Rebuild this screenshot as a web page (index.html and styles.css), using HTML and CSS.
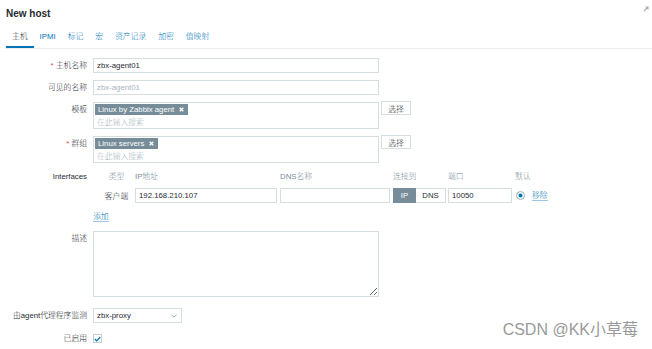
FILE: index.html
```html
<!DOCTYPE html>
<html lang="zh-CN">
<head>
    <meta charset="UTF-8">
    <meta name="viewport" content="width=device-width, initial-scale=1.0">
    <title>New host</title>
    <link rel="stylesheet" href="styles.css">
</head>
<body>
    <div class="dialog">
        <div class="head">
            <h4 class="title">New host</h4>
            <span class="expand">
                <svg width="6" height="6" viewBox="0 0 6 6"><path d="M1 5 L5 1 M2.5 1 H5 V3.5" stroke="#9fb0b9" stroke-width="1.2" fill="none"/></svg>
            </span>
        </div>

        <ul class="tabs">
            <li class="active">主机</li>
            <li>IPMI</li>
            <li>标记</li>
            <li>宏</li>
            <li>资产记录</li>
            <li>加密</li>
            <li>值映射</li>
        </ul>

        <div class="form">
            <div class="row">
                <label class="lbl"><span class="req">*</span> 主机名称</label>
                <div class="ctl"><input class="inp" type="text" value="zbx-agent01"></div>
            </div>
            <div class="row">
                <label class="lbl">可见的名称</label>
                <div class="ctl"><input class="inp" type="text" placeholder="zbx-agent01"></div>
            </div>
            <div class="row">
                <label class="lbl">模板</label>
                <div class="ctl ctl-multi">
                    <div class="multi">
                        <div class="tags">
                            <span class="tag">Linux by Zabbix agent
                                <svg width="5" height="5" viewBox="0 0 5 5"><path d="M0.7 0.7 L4.3 4.3 M4.3 0.7 L0.7 4.3" stroke="#fff" stroke-width="1.3"/></svg>
                            </span>
                        </div>
                        <div class="search">在此输入搜索</div>
                    </div>
                    <button class="btn">选择</button>
                </div>
            </div>
            <div class="row row-group">
                <label class="lbl"><span class="req">*</span> 群组</label>
                <div class="ctl ctl-multi">
                    <div class="multi">
                        <div class="tags">
                            <span class="tag">Linux servers
                                <svg width="5" height="5" viewBox="0 0 5 5"><path d="M0.7 0.7 L4.3 4.3 M4.3 0.7 L0.7 4.3" stroke="#fff" stroke-width="1.3"/></svg>
                            </span>
                        </div>
                        <div class="search">在此输入搜索</div>
                    </div>
                    <button class="btn">选择</button>
                </div>
            </div>

            <div class="row row-if">
                <label class="lbl lbl-if">Interfaces</label>
                <div class="ctl">
                    <div class="if-grid">
                        <div class="if-head if-type">类型</div>
                        <div class="if-head">IP地址</div>
                        <div class="if-head">DNS名称</div>
                        <div class="if-head">连接到</div>
                        <div class="if-head">端口</div>
                        <div class="if-head">默认</div>

                        <div class="if-type">客户端</div>
                        <div><input class="inp inp-ip" type="text" value="192.168.210.107"></div>
                        <div><input class="inp inp-dns" type="text" value=""></div>
                        <div class="seg">
                            <span class="seg-on">IP</span>
                            <span class="seg-off">DNS</span>
                        </div>
                        <div><input class="inp inp-port" type="text" value="10050"></div>
                        <div class="if-default">
                            <span class="radio"></span>
                            <a class="link">移除</a>
                        </div>
                    </div>
                    <a class="link add">添加</a>
                </div>
            </div>

            <div class="row row-desc">
                <label class="lbl">描述</label>
                <div class="ctl"><textarea class="area"></textarea></div>
            </div>
            <div class="row row-proxy">
                <label class="lbl">由agent代理程序监测</label>
                <div class="ctl">
                    <div class="sel">
                        <span>zbx-proxy</span>
                        <svg width="6" height="4" viewBox="0 0 6 4"><path d="M0.5 0.8 L3 3.2 L5.5 0.8" stroke="#768d99" stroke-width="0.8" fill="none"/></svg>
                    </div>
                </div>
            </div>
            <div class="row row-check">
                <label class="lbl">已启用</label>
                <div class="ctl ctl-check">
                    <span class="check">
                        <svg width="7" height="6" viewBox="0 0 7 6"><path d="M0.8 3 L2.7 4.8 L6.2 1" stroke="#0275b8" stroke-width="1.2" fill="none"/></svg>
                    </span>
                </div>
            </div>
        </div>

        <div class="watermark">CSDN @KK小草莓</div>
    </div>
</body>
</html>
```

FILE: styles.css
```css
body {
    margin: 0;
    font-family: "Liberation Sans", Arial, "Noto Sans CJK SC", sans-serif;
    font-size: 7.8px;
    font-weight: 300;
    color: #1f2c33;
    background-color: #fff;
}
.dialog {
    position: relative;
    height: 349px;
    overflow: hidden;
}
.head {
    display: flex;
    justify-content: space-between;
    padding: 8px 3px 0 6px;
}
.title {
    margin: 0;
    font-size: 10px;
    font-weight: bold;
    line-height: 12px;
}
.expand {
    margin-top: -2px;
    line-height: 0;
}
.tabs {
    display: flex;
    list-style: none;
    margin: 8px 0 0 5px;
    padding: 0 0 0 1px;
    border-bottom: 1px solid #ebeef0;
}
.tabs li {
    padding: 4px 6px;
    line-height: 10px;
    color: #0275b8;
    border-bottom: 2px solid transparent;
}
.tabs li.active {
    color: #1f2c33;
    border-bottom-color: #0275b8;
}
.form {
    padding-top: 9px;
}
.row {
    display: flex;
    gap: 6px;
    margin-bottom: 7px;
}
.lbl {
    width: 87px;
    flex-shrink: 0;
    text-align: right;
    line-height: 15px;
    white-space: nowrap;
}
.req {
    color: #e54b4b;
}
.ctl {
    flex: 1;
}
.inp {
    display: block;
    width: 286px;
    height: 15px;
    box-sizing: border-box;
    margin: 0;
    padding: 0 3px;
    border: 1px solid #d6dde1;
    border-radius: 0;
    font: inherit;
    color: #1f2c33;
    background-color: #fff;
    outline: none;
}
.inp::placeholder {
    color: #a8b6bd;
}
.ctl-multi {
    display: flex;
    align-items: flex-start;
    gap: 2px;
}
.multi {
    width: 286px;
    height: 27px;
    box-sizing: border-box;
    border: 1px solid #d6dde1;
    padding: 0 1px;
}
.tags {
    display: flex;
    height: 12px;
    padding-top: 1px;
}
.tag {
    display: inline-flex;
    align-items: center;
    gap: 5px;
    height: 11px;
    padding: 0 4px 0 3px;
    background-color: #768d99;
    color: #fff;
    line-height: 11px;
}
.search {
    padding-left: 2px;
    line-height: 13px;
    color: #a8b6bd;
}
.btn {
    margin-top: -1px;
    width: 30px;
    height: 14px;
    padding: 0;
    border: 1px solid #d6dde1;
    background-color: #fff;
    font: inherit;
    color: #1f2c33;
}
.row-group {
    margin-bottom: 9px;
}
.row-if {
    margin-bottom: 9px;
}
.lbl-if {
    line-height: 10px;
}
.if-grid {
    display: grid;
    grid-template-columns: 42px 145px 113px 55px 67px auto;
    row-gap: 6px;
    align-items: center;
}
.if-head {
    line-height: 10px;
    color: #768d99;
}
.if-type {
    padding-left: 5px;
    text-align: center;
}
.if-head.if-type {
    color: #768d99;
}
.inp-ip {
    width: 142px;
}
.inp-dns {
    width: 110px;
}
.inp-port {
    width: 64px;
}
.seg {
    display: flex;
    height: 15px;
    line-height: 15px;
}
.seg span {
    box-sizing: border-box;
    text-align: center;
}
.seg-on {
    width: 23px;
    background-color: #768d99;
    color: #fff;
}
.seg-off {
    width: 30px;
    border: 1px solid #d6dde1;
    border-left: none;
    line-height: 13px;
}
.if-default {
    display: flex;
    align-items: center;
    gap: 7px;
    padding-left: 1px;
}
.radio {
    width: 9px;
    height: 9px;
    box-sizing: border-box;
    border: 1px solid #c4ced3;
    border-radius: 50%;
    background-color: #0275b8;
    box-shadow: inset 0 0 0 1.5px #fff;
}
.link {
    color: #0275b8;
    text-decoration: none;
    border-bottom: 1px solid #9cc5e2;
    line-height: 9px;
}
.add {
    display: inline-block;
    margin-top: 9px;
}
.area {
    display: block;
    width: 286px;
    height: 66px;
    box-sizing: border-box;
    margin: 0;
    border: 1px solid #d6dde1;
    border-radius: 0;
    font: inherit;
}
.row-desc {
    margin-bottom: 11px;
}
.sel {
    display: flex;
    align-items: center;
    justify-content: space-between;
    width: 89px;
    height: 15px;
    box-sizing: border-box;
    padding: 0 4px 0 3px;
    border: 1px solid #d6dde1;
}
.row-proxy {
    margin-bottom: 8px;
}
.ctl-check {
    display: flex;
    align-items: center;
}
.check {
    display: flex;
    align-items: center;
    justify-content: center;
    width: 9px;
    height: 9px;
    box-sizing: border-box;
    border: 1px solid #c4ced3;
}
.watermark {
    position: absolute;
    right: 14px;
    bottom: 10px;
    font-size: 16px;
    font-weight: 400;
    line-height: 18px;
    color: #9a9a9a;
}
```
